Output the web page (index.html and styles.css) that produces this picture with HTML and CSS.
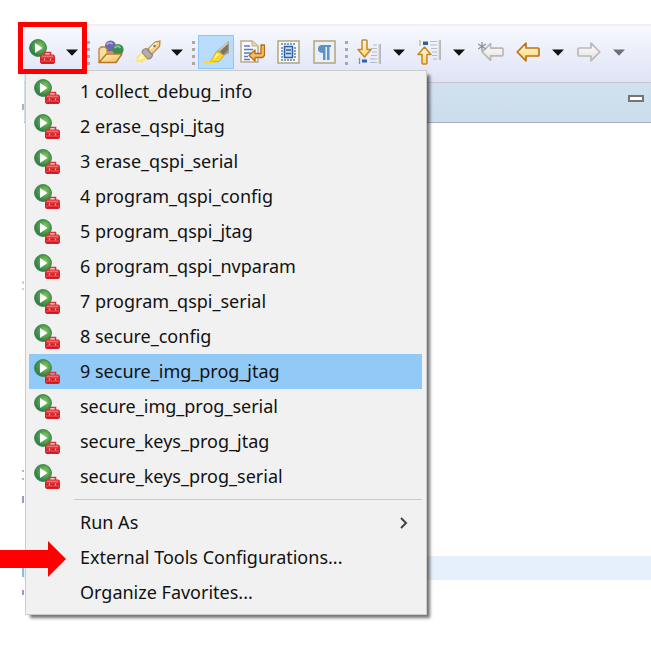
FILE: index.html
```html
<!DOCTYPE html>
<html lang="en">
<head>
<meta charset="utf-8">
<title>External Tools</title>
<link rel="stylesheet" href="styles.css">
</head>
<body>
<svg class="defs" aria-hidden="true">
  <defs>
    <radialGradient id="green" cx=".6" cy=".4" r=".6"><stop offset="0" stop-color="#8fc866"/><stop offset=".55" stop-color="#4fa24c"/><stop offset="1" stop-color="#2a7d45"/></radialGradient>
    <linearGradient id="gold" x1="0" y1="0" x2="0" y2="1"><stop offset="0" stop-color="#fffbe0"/><stop offset="1" stop-color="#fbd66b"/></linearGradient>
    <linearGradient id="pale" x1="0" y1="0" x2="0" y2="1"><stop offset="0" stop-color="#fff"/><stop offset="1" stop-color="#e2e1dc"/></linearGradient>
    <linearGradient id="folder" x1="0" y1="0" x2="1" y2="1"><stop offset="0" stop-color="#fff3bd"/><stop offset="1" stop-color="#f0b95b"/></linearGradient>
    <symbol id="run" viewBox="0 0 26 26">
      <circle cx="9" cy="9" r="8.4" fill="url(#green)" stroke="#3d8452" stroke-width="1"/>
      <path d="M6 4v10l7.5-5z" fill="#fff"/>
      <path d="M15.500 16.500v-3h6v3" fill="none" stroke="#d8343a" stroke-width="1.600"/>
      <rect x="11.500" y="16" width="14" height="8.500" rx="1.500" fill="#e8393f" stroke="#d3222a"/>
      <path d="M13 17.200h11" stroke="#f98684"/>
      <path d="M12 20.300h13" stroke="#b81c24"/>
      <path d="M15.500 19.500v1.800M21.500 19.500v1.800" stroke="#f9aaa5" stroke-width="1.300"/>
      <path d="M13 23.500h11" stroke="#c81922"/>
    </symbol>
    <symbol id="caret" viewBox="0 0 12 7"><path d="M0 .5h12L6 6.800z" fill="currentColor"/></symbol>
    <symbol id="left" viewBox="0 0 24 20"><path d="M1.200 10 10 1.200V6h12q1 0 1 1v6q0 1-1 1H10v4.800z" stroke-width="1.700" stroke-linejoin="round"/></symbol>
  </defs>
</svg>

<main class="window">
  <header class="toolbar">
    <div class="split">
      <button class="tool" aria-label="Run external tool"><svg width="26" height="26"><use href="#run"/></svg></button>
      <button class="drop" aria-label="External tools list"><svg width="12" height="7"><use href="#caret"/></svg></button>
    </div>
    <span class="grip"></span>
    <button class="tool" aria-label="Open type"><svg width="26" height="24" viewBox="0 0 26 24">
      <circle cx="12.500" cy="6" r="5.500" fill="#6d65ae"/><path d="M8.500 4.500q4-3.500 6 0" stroke="#aaa4db" stroke-width="1.800" fill="none"/>
      <path d="M1 22V9l2-2h4l2 2v3h10v9z" fill="#f9dda0" stroke="#bd8432" stroke-width="1.300"/>
      <circle cx="20" cy="9.500" r="5.600" fill="#398d51"/><path d="M16.500 8q3.500-3.500 6 0" stroke="#8bc18e" stroke-width="1.800" fill="none"/>
      <path d="M1 22.500 8.500 14H24l-6 8.500z" fill="url(#folder)" stroke="#b67824" stroke-width="1.400" stroke-linejoin="round"/></svg></button>
    <div class="split">
      <button class="tool" aria-label="Search"><svg width="27" height="24" viewBox="0 0 27 24">
        <path d="M14 9 21 2l5-1-.5 5.500L17 15z" fill="#f9d18b" stroke="#b98b4c" stroke-width="1.300"/>
        <path d="m16 9 6-6" stroke="#fff1c8" stroke-width="2"/><circle cx="20.500" cy="6" r="1.200" fill="#5377aa"/>
        <path d="M8 13q0-4 4.500-4.500l6 6.500q-1 4-5 4z" fill="#b5aca7" stroke="#908781" stroke-width="1.200"/>
        <path d="M7.500 12.500 1 18l2.500.5L1.500 23l5-1.500.5 2L13 19z" fill="#ffe477"/><path d="M8 14 4 20l6-2z" fill="#fffbd8"/></svg></button>
      <button class="drop" aria-label="Search options"><svg width="12" height="7"><use href="#caret"/></svg></button>
    </div>
    <span class="grip"></span>
    <button class="tool active" aria-label="Toggle mark occurrences" aria-pressed="true"><svg width="27" height="24" viewBox="0 0 27 24">
      <path d="M26 1v12l-6 3-6-5z" fill="#a69b81"/><path d="m17 11 8-9v8l-5 5z" fill="#777568"/><path d="m16 11 9-8" stroke="#d3ccb3" stroke-width="1.500"/>
      <path d="M14 11 7 22l9-.5 5-6z" fill="#fbd82c" stroke="#d8aa22"/><path d="m13.500 14-4 6 7-6z" fill="#fff69a"/>
      <path d="M0 21.500h9l4 1.500H0z" fill="#ffdc16"/></svg></button>
    <button class="tool" aria-label="Toggle word wrap"><svg width="25" height="24" viewBox="0 0 25 24">
      <path d="M1 1h11l6 5v16H1z" fill="#f8f9fc" stroke="#b8ad82" stroke-width="1.500"/><path d="M12 1v5h6" fill="#e6d9a9" stroke="#b8ad82"/>
      <path d="M4 6h6M4 9.500h9M4 13h7M4 16.500h4M4 19.500h6" stroke="#577fb5" stroke-width="1.300"/>
      <path d="M21 5v8.500h-6V10l-6 5.500 6 5.500v-3.500h7.500l2-2V5z" fill="#f3bd62" stroke="#b36b18" stroke-width="1.300" stroke-linejoin="round"/></svg></button>
    <button class="tool" aria-label="Toggle block selection"><svg width="23" height="24" viewBox="0 0 23 24">
      <rect x="1" y="1" width="21" height="22" fill="#f5f8fd" stroke="#b7ab7d" stroke-width="1.600"/>
      <path d="M4 4h15M4 20h15" stroke="#5983b5" stroke-width="1.400" stroke-dasharray="2 1"/>
      <path d="M4 8h2M4 11h2M4 14h2M4 17h2M17 8h2M17 11h2M17 14h2M17 17h2" stroke="#5983b5" stroke-width="1.300"/>
      <rect x="7.500" y="6.500" width="8" height="11" fill="#c9dcf3" stroke="#315d9a" stroke-width="1.500"/><path d="M9 10h5M9 13.500h5" stroke="#315d9a" stroke-width="1.500"/></svg></button>
    <button class="tool" aria-label="Show whitespace"><svg width="23" height="24" viewBox="0 0 23 24">
      <rect x="1" y="1" width="21" height="22" fill="#e6f1fc" stroke="#b7ab7d" stroke-width="1.600"/>
      <path d="M18 5H9q-4 0-4 4t5 4v7h2.500V7H14v13h2.500V7H18z" fill="#5f90c6"/></svg></button>
    <span class="grip"></span>
    <div class="split">
      <button class="tool" aria-label="Next annotation"><svg width="24" height="26" viewBox="0 0 24 26">
        <path d="M16 6h4M14 9.500h6M15 13h5M14 16.500h6M13 20h7M13 23.500h7" stroke="#b4bccb" stroke-width="1.200"/><path d="M23 5v20" stroke="#8d9bb0" stroke-width="1.300"/><path d="M22 5v20" stroke="#ddd0a0"/><path d="M2.500 19v6" stroke="#7d93b3" stroke-width="1.300"/><rect x="5" y="20.500" width="5" height="3" fill="#2f62a3"/>
        <path d="M5 2q0-1 1-1h3q1 0 1 1v8.500h4L7.500 18 1 10.500h4z" fill="url(#gold)" stroke="#c98425" stroke-width="1.500" stroke-linejoin="round"/></svg></button>
      <button class="drop" aria-label="Next annotation options"><svg width="12" height="7"><use href="#caret"/></svg></button>
    </div>
    <div class="split">
      <button class="tool" aria-label="Previous annotation"><svg width="24" height="26" viewBox="0 0 24 26">
        <path d="M13 2.500h7M13 6h7M14 9.500h6M15 13h5M15 16.500h5M16 20h4" stroke="#b4bccb" stroke-width="1.200"/><path d="M23 1v20" stroke="#8d9bb0" stroke-width="1.300"/><path d="M22 1v20" stroke="#ddd0a0"/><path d="M3 1v6" stroke="#c6b98a" stroke-width="1.300"/><rect x="6" y="2.500" width="5" height="3.500" fill="#2f62a3"/>
        <path d="M5 24q0 1 1 1h3q1 0 1-1v-8.500h4L7.500 8 1 15.500h4z" fill="url(#gold)" stroke="#c98425" stroke-width="1.500" stroke-linejoin="round"/></svg></button>
      <button class="drop" aria-label="Previous annotation options"><svg width="12" height="7"><use href="#caret"/></svg></button>
    </div>
    <div class="history">
      <button class="tool" aria-label="Last edit location"><svg width="26" height="20" viewBox="0 0 26 20"><use href="#left" x="3" width="23" height="20" fill="url(#pale)" stroke="#b9b8b3"/>
        <path d="M4 0v9M0 2l8 5M8 2 0 7" stroke="#8c9298" stroke-width="1.300"/></svg></button>
      <div class="split">
        <button class="tool" aria-label="Back"><svg width="24" height="20" fill="url(#gold)" stroke="#bd7415"><use href="#left"/></svg></button>
        <button class="drop" aria-label="Back history"><svg width="12" height="7"><use href="#caret"/></svg></button>
      </div>
      <div class="split">
        <button class="tool" aria-label="Forward"><svg class="flip" width="24" height="20" fill="url(#pale)" stroke="#b9b9bb"><use href="#left"/></svg></button>
        <button class="drop muted" aria-label="Forward history"><svg width="12" height="7"><use href="#caret"/></svg></button>
      </div>
    </div>
  </header>
  <div class="tabs"><button class="minimize" aria-label="Minimize"></button></div>
  <section class="editor"><div class="current-line"></div></section>

  <svg class="margin-marks" width="2" height="500" viewBox="0 0 2 500" aria-hidden="true">
    <path d="M1 8v6" stroke="#55745f"/><path d="M1 185v3M1 192v2" stroke="#b6a478"/><path d="M1 374v2M1 382v2" stroke="#8a58a8"/><path d="M1 400v7M1 494v5" stroke="#5524a0"/><path d="M1 472v9" stroke="#1677cf"/>
  </svg>

  <nav class="menu" aria-label="External tools">
    <button class="item"><svg class="icon"><use href="#run"/></svg><span class="text">1 collect_debug_info</span></button>
    <button class="item"><svg class="icon"><use href="#run"/></svg><span class="text">2 erase_qspi_jtag</span></button>
    <button class="item"><svg class="icon"><use href="#run"/></svg><span class="text">3 erase_qspi_serial</span></button>
    <button class="item"><svg class="icon"><use href="#run"/></svg><span class="text">4 program_qspi_config</span></button>
    <button class="item"><svg class="icon"><use href="#run"/></svg><span class="text">5 program_qspi_jtag</span></button>
    <button class="item"><svg class="icon"><use href="#run"/></svg><span class="text">6 program_qspi_nvparam</span></button>
    <button class="item"><svg class="icon"><use href="#run"/></svg><span class="text">7 program_qspi_serial</span></button>
    <button class="item"><svg class="icon"><use href="#run"/></svg><span class="text">8 secure_config</span></button>
    <button class="item selected"><svg class="icon"><use href="#run"/></svg><span class="text">9 secure_img_prog_jtag</span></button>
    <button class="item"><svg class="icon"><use href="#run"/></svg><span class="text">secure_img_prog_serial</span></button>
    <button class="item"><svg class="icon"><use href="#run"/></svg><span class="text">secure_keys_prog_jtag</span></button>
    <button class="item"><svg class="icon"><use href="#run"/></svg><span class="text">secure_keys_prog_serial</span></button>
    <hr class="rule">
    <button class="item"><span class="icon"></span><span class="text">Run As</span><svg class="chevron" width="8" height="12" viewBox="0 0 8 12"><path d="m1 1 5 5-5 5" fill="none" stroke="#444" stroke-width="2"/></svg></button>
    <button class="item"><span class="icon"></span><span class="text">External Tools Configurations...</span></button>
    <button class="item"><span class="icon"></span><span class="text">Organize Favorites...</span></button>
  </nav>
  <div class="callout-box"></div>
</main>
<svg class="callout-arrow" width="66" height="36" viewBox="0 0 66 36" aria-hidden="true"><path d="M0 9h48V0l18 18-18 18v-9H0z" fill="#f00"/></svg>
</body>
</html>
```
FILE: styles.css
```css
* { box-sizing: border-box; }

body {
  margin: 0;
  min-height: 100vh;
  position: relative;
  background: #fff;
  font-family: "Segoe UI", "Noto Sans", "Open Sans", sans-serif;
  font-size: 18px;
  color: #111;
  overflow: hidden;
}

button {
  margin: 0;
  padding: 0;
  border: 0;
  background: none;
  color: inherit;
  font: inherit;
}

svg { display: block; }
.defs { position: absolute; width: 0; height: 0; }

.window {
  position: relative;
  margin: 24px 0 0 24px;
}

.toolbar {
  display: flex;
  align-items: flex-start;
  height: 59px;
  padding-top: 9px;
  border-top: 2px solid #efefef;
  border-bottom: 1px solid #c8c8cc;
  background: linear-gradient(#f7f9fe, #dfe3f5);
}

.split { display: flex; }
.history { display: flex; gap: 1px; margin-left: 2px; }

.tool, .drop {
  display: flex;
  align-items: center;
  justify-content: center;
  flex: none;
  width: 36px;
  height: 34px;
}
.drop { width: 24px; color: #111; }
.drop.muted { color: #6d7077; }
.tool.active { background: #b9dcfa; border: 1px solid #8fc8f7; }
.flip { transform: scaleX(-1); }

.grip {
  flex: none;
  width: 3px;
  height: 24px;
  margin: 6px 3px 0;
  background: repeating-linear-gradient(#aaa9a6 0 3px, transparent 3px 7px);
}

.tabs {
  display: flex;
  justify-content: flex-end;
  height: 40px;
  padding: 12px 7px 0 0;
  border-bottom: 1px solid #a7afc4;
  background: linear-gradient(#d1e1f0, #cbdceb);
}
.minimize {
  width: 16px;
  height: 7px;
  border: 2px solid #77746d;
  background: #fff;
}

.editor { padding-top: 433px; }
.current-line { height: 24px; background: #e6f0fd; }

.margin-marks { position: absolute; left: -2px; top: 72px; }

.menu {
  position: absolute;
  left: 1px;
  top: 46px;
  width: 402px;
  padding: 3px 4px 4px 3px;
  border: 1px solid #ccc;
  background: #f1f1f1;
  box-shadow: 4px 4px 3px -1px rgba(0, 0, 0, .55);
}
.item {
  display: flex;
  align-items: center;
  width: 100%;
  height: 35px;
  padding-left: 5px;
  text-align: left;
  white-space: nowrap;
}
.item.selected { background: #91c9f7; }
.icon { flex: none; width: 26px; height: 26px; margin-right: 20px; }
.text { padding-bottom: 2px; }
.chevron { margin: 0 14px 0 auto; }
.rule {
  height: 1px;
  margin: 5px 0 5px 45px;
  border: 0;
  background: #ccc;
}

.callout-box {
  position: absolute;
  left: -6px;
  top: -2px;
  width: 69px;
  height: 52px;
  border: 5px solid #f00;
}
.callout-arrow { position: absolute; left: 0; top: 541px; }
```
